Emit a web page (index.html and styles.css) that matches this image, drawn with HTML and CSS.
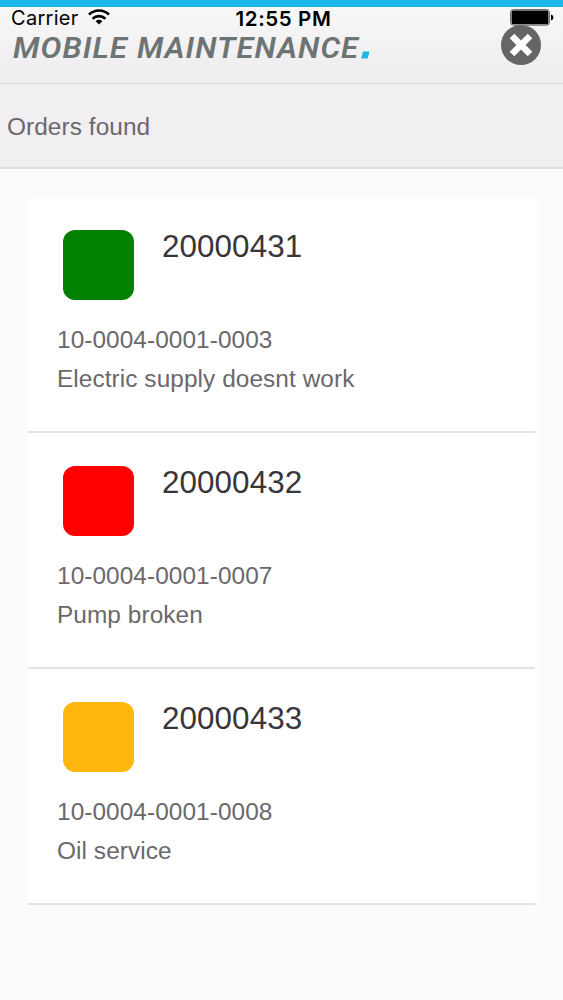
FILE: index.html
```html
<!DOCTYPE html>
<html lang="en">
<head>
    <meta charset="UTF-8">
    <meta name="viewport" content="width=device-width, initial-scale=1.0">
    <title>Mobile Maintenance</title>
    <link rel="stylesheet" href="styles.css">
</head>
<body>
    <header class="header">
        <div class="status-bar">
            <div class="carrier">
                <span>Carrier</span>
                <svg class="wifi" width="22" height="16" viewBox="0 0 22 16">
                    <path d="M1 5.6a14.2 14.2 0 0 1 20 0M4.6 9.7a9.2 9.2 0 0 1 12.8 0" fill="none" stroke="#000" stroke-width="2.7"/>
                    <path d="M11 15.6l-3.4-3.4a4.9 4.9 0 0 1 6.8 0z"/>
                </svg>
            </div>
            <span class="time">12:55 PM</span>
            <svg class="battery" width="44" height="17" viewBox="0 0 44 17">
                <rect x="0.7" y="0.7" width="38.6" height="15.4" rx="2.5" fill="#fff" stroke="#555" stroke-width="1"/>
                <rect x="1.6" y="1.6" width="36.8" height="13.6" rx="1.5"/>
                <path d="M41 5.5q2.4 0.6 2.4 3t-2.4 3z"/>
            </svg>
        </div>
        <div class="title-bar">
            <svg class="logo" width="370" height="44" viewBox="0 0 370 44">
                <text class="logo-text" x="1" y="29.3" textLength="115" lengthAdjust="spacingAndGlyphs">MOBILE</text>
                <text class="logo-text" x="125" y="29.3" textLength="222" lengthAdjust="spacingAndGlyphs">MAINTENANCE</text>
                <path class="logo-dot" d="M351 22.5h6.5l-1.8 7h-6.5z"/>
            </svg>
            <svg class="close" width="40" height="40" viewBox="0 0 40 40">
                <circle cx="20" cy="20" r="20" fill="#676467"/>
                <path d="M11 11l18 18M29 11l-18 18" stroke="#fff" stroke-width="6.5"/>
            </svg>
        </div>
    </header>
    <div class="sub-header">
        <span class="sub-title">Orders found</span>
    </div>
    <ul class="orders">
        <li class="order">
            <div class="order-top">
                <div class="priority green"></div>
                <span class="number">20000431</span>
            </div>
            <div class="location">10-0004-0001-0003</div>
            <div class="description">Electric supply doesnt work</div>
        </li>
        <li class="order">
            <div class="order-top">
                <div class="priority red"></div>
                <span class="number">20000432</span>
            </div>
            <div class="location">10-0004-0001-0007</div>
            <div class="description">Pump broken</div>
        </li>
        <li class="order">
            <div class="order-top">
                <div class="priority orange"></div>
                <span class="number">20000433</span>
            </div>
            <div class="location">10-0004-0001-0008</div>
            <div class="description">Oil service</div>
        </li>
    </ul>
</body>
</html>
```

FILE: styles.css
```css
* {
    box-sizing: border-box;
}
body {
    margin: 0;
    min-height: 100vh;
    background-color: #fcfafd;
    color: #6b686b;
    font-family: "Liberation Sans", Arial, sans-serif;
    font-size: 24.4px;
    letter-spacing: 0.07px;
}
.header {
    height: 84px;
    border-top: 7px solid #1ab7e8;
    border-bottom: 1px solid #d9d7d9;
    background: linear-gradient(#f8f7f8, #eeecee);
}
.status-bar {
    display: grid;
    grid-template-columns: 1fr auto 1fr;
    height: 22px;
    padding: 0 9px 0 11px;
    color: #000;
    font-family: Inter, sans-serif;
    font-size: 20px;
    line-height: 23px;
}
.carrier {
    display: flex;
    gap: 9px;
    letter-spacing: 0.3px;
}
.wifi {
    margin-top: 2px;
}
.time {
    padding-left: 2px;
    font-size: 20.5px;
    font-weight: 600;
    letter-spacing: 0.6px;
}
.battery {
    justify-self: end;
    margin-top: 2px;
}
.title-bar {
    display: flex;
    justify-content: space-between;
    align-items: flex-start;
    padding: 0 22px 0 12px;
}
.logo-text {
    fill: #6c7573;
    font-family: Roboto, sans-serif;
    font-size: 30px;
    font-style: italic;
    font-weight: 600;
    letter-spacing: 1px;
}
.logo-dot {
    fill: #1ab7e8;
}
.close {
    margin-top: -4px;
}
.sub-header {
    display: flex;
    align-items: center;
    height: 85px;
    padding: 3px 7px 0;
    border-bottom: 2px solid #dfdde0;
    background-color: #f1eff2;
}
.orders {
    width: 507px;
    margin: 28px 0 0 28px;
    padding: 0;
    list-style: none;
    box-shadow: 4px 0 0 #fefdff;
}
.order {
    height: 236px;
    padding: 33px 29px 0;
    border-bottom: 2px solid #e4e2e5;
    background-color: #fff;
}
.order-top {
    display: flex;
    gap: 28px;
    height: 90px;
    padding-left: 6px;
}
.priority {
    width: 71px;
    height: 70px;
    border-radius: 12px;
}
.green {
    background-color: #018001;
}
.red {
    background-color: #fe0000;
}
.orange {
    background-color: #ffb70f;
}
.number {
    color: #38363a;
    font-size: 31.4px;
    line-height: 34px;
}
.location, .description {
    line-height: 39px;
}
```
